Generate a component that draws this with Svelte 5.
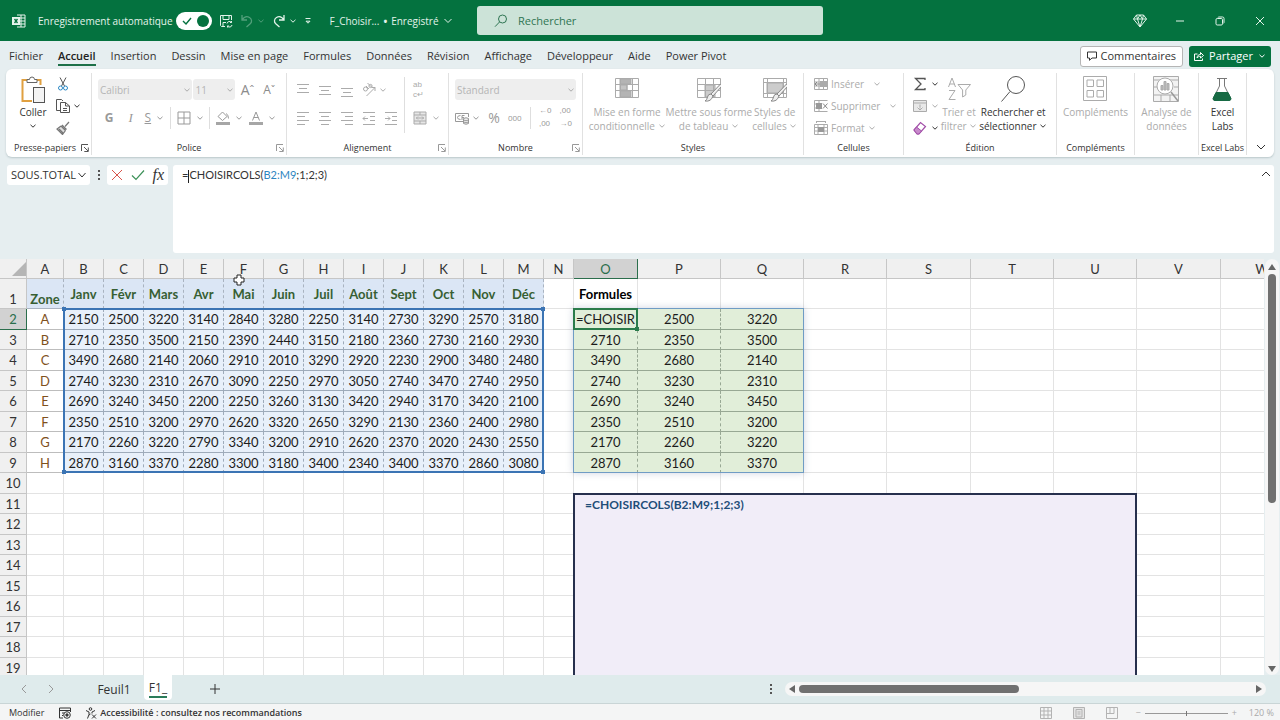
<script lang="ts">
  interface Column {
    name: string;
    width: number;
  }

  const columns: Column[] = [
    { name: 'A', width: 37 },
    ...'BCDEFGHIJKLM'.split('').map((name) => ({ name, width: 40 })),
    { name: 'N', width: 30 },
    { name: 'O', width: 64 },
    ...'PQRSTUVW'.split('').map((name) => ({ name, width: name === 'S' || name === 'V' ? 84 : 83 })),
  ];

  const months = ['Janv', 'Févr', 'Mars', 'Avr', 'Mai', 'Juin', 'Juil', 'Août', 'Sept', 'Oct', 'Nov', 'Déc'];

  const zones = [
    { name: 'A', values: [2150, 2500, 3220, 3140, 2840, 3280, 2250, 3140, 2730, 3290, 2570, 3180] },
    { name: 'B', values: [2710, 2350, 3500, 2150, 2390, 2440, 3150, 2180, 2360, 2730, 2160, 2930] },
    { name: 'C', values: [3490, 2680, 2140, 2060, 2910, 2010, 3290, 2920, 2230, 2900, 3480, 2480] },
    { name: 'D', values: [2740, 3230, 2310, 2670, 3090, 2250, 2970, 3050, 2740, 3470, 2740, 2950] },
    { name: 'E', values: [2690, 3240, 3450, 2200, 2250, 3260, 3130, 3420, 2940, 3170, 3420, 2100] },
    { name: 'F', values: [2350, 2510, 3200, 2970, 2620, 3320, 2650, 3290, 2130, 2360, 2400, 2980] },
    { name: 'G', values: [2170, 2260, 3220, 2790, 3340, 3200, 2910, 2620, 2370, 2020, 2430, 2550] },
    { name: 'H', values: [2870, 3160, 3370, 2280, 3300, 3180, 3400, 2340, 3400, 3370, 2860, 3080] },
  ];

  const menu = ['Fichier', 'Accueil', 'Insertion', 'Dessin', 'Mise en page', 'Formules', 'Données', 'Révision', 'Affichage', 'Développeur', 'Aide', 'Power Pivot'];

  const rows = Array.from({ length: 19 }, (_, i) => i + 1);

  const HEAD_W = 27;
  const HEAD_H = 20;

  function cellText(row: number, col: number): string {
    if (row === 1) {
      if (col === 0) return 'Zone';
      if (col <= 12) return months[col - 1];
      return col === 14 ? 'Formules' : '';
    }
    const zone = zones[row - 2];
    if (!zone) return '';
    if (col === 0) return zone.name;
    if (col <= 12) return String(zone.values[col - 1]);
    if (row === 2 && col === 14) return '=CHOISIR';
    if (col >= 14 && col <= 16) return String(zone.values[col - 14]);
    return '';
  }

  function cellClass(row: number, col: number): string {
    if (row === 1) return col === 0 ? 'month zone-title' : col <= 12 ? 'month' : 'title';
    if (row > 9) return '';
    if (col === 0) return 'zone';
    if (col <= 12) return 'source';
    if (col >= 14 && col <= 16) return 'result';
    return '';
  }

  function colX(col: number): number {
    return HEAD_W + columns.slice(0, col).reduce((sum, c) => sum + c.width, 0);
  }

  // row 1 is 30px, the others go 21, 20, 21, 20...
  function rowY(row: number): number {
    let y = HEAD_H;
    for (let r = 1; r < row; r++) y += r === 1 ? 30 : r % 2 === 0 ? 21 : 20;
    return y;
  }

  function range(c1: number, r1: number, c2: number, r2: number): string {
    const x = colX(c1) - 1;
    const y = rowY(r1) - 1;
    return `left:${x}px;top:${y}px;width:${colX(c2 + 1) - x}px;height:${rowY(r2 + 1) - y}px`;
  }

  let autosave = true;
  let search = '';
  let nameBox = 'SOUS.TOTAL';
  let zoom = 50;
</script>

{#snippet chevron()}
  <svg class="chev" viewBox="0 0 8 8" width="8" height="8"><path d="M1.5 2.8 4 5.2 6.5 2.8" /></svg>
{/snippet}

{#snippet launcher()}
  <svg class="launcher" viewBox="0 0 8 8" width="8" height="8"><path d="M.5 7V.5H7M3 3l4 4M7.3 3.500v4h-4" /></svg>
{/snippet}

<div class="app">
  <header class="titlebar">
    <div class="title-left">
      <svg class="logo" viewBox="0 0 14 14" width="14" height="14">
        <path d="M5 1h8v12H5M5 4h8M5 7h8M5 10h8M9 1v12" fill="none" stroke="#e8f5ee" />
        <rect x="0" y="3" width="8" height="8" fill="#e8f5ee" />
        <path d="m2.500 5 3 4M5.500 5l-3 4" stroke="#04703e" stroke-width="1.3" />
      </svg>
      <label class="autosave">
        <span>Enregistrement automatique</span>
        <input type="checkbox" bind:checked={autosave} />
        <span class="switch">
          <svg viewBox="0 0 10 8" width="10" height="8"><path d="m1 4 3 3 5-6" fill="none" stroke="#04703e" stroke-width="1.4" /></svg>
          <span class="knob"></span>
        </span>
      </label>
      <button class="tool save" aria-label="Enregistrer">
        <svg viewBox="0 0 14 14" width="14" height="14"><path d="M6 12.5H2.5l-1-1V1.5h11V6M4 1.5v4h6v-4M4 12V8.5h3M8 9.5a2.5 2.5 0 0 1 4.5-1V7M12.5 8.5H11M13 11a2.5 2.5 0 0 1-4.5 1v1.5M8.5 12H10" /></svg>
      </button>
      <button class="tool faded undo" aria-label="Annuler">
        <svg viewBox="0 0 14 14" width="14" height="14"><path d="M2 1v5h5M2 6c2-3 5-4 7.5-2.500S12 8 10.5 9.500L6.5 13" stroke-width="1.3" /></svg>
        {@render chevron()}
      </button>
      <button class="tool redo" aria-label="Rétablir">
        <svg viewBox="0 0 14 14" width="14" height="14"><path d="M12 1v5H7M12 6C10 3 7 2 4.500 3.500S2 8 3.500 9.500L7.500 13" stroke-width="1.3" /></svg>
        {@render chevron()}
      </button>
      <button class="tool more" aria-label="Personnaliser">
        <svg viewBox="0 0 8 8" width="8" height="8"><path d="M1.500 1.500h5M2 4.200l2 2 2-2z" /></svg>
      </button>
      <button class="doc">F_Choisir... <b>•</b> Enregistré <svg viewBox="0 0 10 8" width="10" height="8"><path d="m1.500 2 3.500 3.500L8.500 2" /></svg></button>
    </div>
    <label class="search">
      <svg viewBox="0 0 14 14" width="14" height="14"><path d="M12.500 5a4 4 0 1 1-8 0 4 4 0 0 1 8 0M5.500 8 1 12.700" fill="none" stroke="#2f7553" /></svg>
      <input type="text" bind:value={search} placeholder="Rechercher" aria-label="Rechercher" />
    </label>
    <div class="window">
      <button aria-label="Premium">
        <svg viewBox="0 0 14 14" width="14" height="14"><path d="M3.500 1h7L13.500 5 7 13 .5 5zM.5 5h13M4.500 5 7 13l2.500-8L7 1zM3.500 1l1 4M10.500 1l-1 4" /></svg>
      </button>
      <button aria-label="Réduire"><svg viewBox="0 0 10 10" width="10" height="10"><path d="M1 5h8" /></svg></button>
      <button aria-label="Restaurer"><svg viewBox="0 0 10 10" width="10" height="10"><rect x="1" y="2.5" width="6.5" height="6.5" rx="1.2" /><path d="M3 1.500q0-.5.8-.5H7.500q1.500 0 1.500 1.500v4q0 .8-.5.8" /></svg></button>
      <button aria-label="Fermer"><svg viewBox="0 0 10 10" width="10" height="10"><path d="m1 1 8 8M9 1 1 9" /></svg></button>
    </div>
  </header>

  <nav class="menu">
    {#each menu as item}
      <button class:active={item === 'Accueil'}>{item}</button>
    {/each}
    <span class="spacer"></span>
    <button class="comments">
      <svg viewBox="0 0 10 10" width="10" height="10"><path d="M.5 1h9v6H5L2.500 9.300V7h-2z" /></svg>Commentaires
    </button>
    <button class="share">
      <svg viewBox="0 0 10 10" width="10" height="10"><path d="M3.500 3H.5v6.500h8V7.500M3 7c.3-2.500 1.500-3.500 3.500-3.500V1.500L9.500 4.500 6.500 7V5.300C5 5.300 4 5.800 3 7" /></svg>Partager {@render chevron()}
    </button>
  </nav>

  <section class="ribbon">
    <div class="group">
      <div class="body clipboard">
        <button class="big">
          <svg viewBox="0 0 24 28" width="24" height="28">
            <path d="M6 4H1.500v21H11M15 4h4.500v5" fill="none" stroke="#e0a040" stroke-width="2" />
            <path d="M6 6.500V3.500h2.500a2.500 2.500 0 0 1 5 0H16v3z" fill="#fff" stroke="#666" />
            <rect x="12.5" y="11.5" width="11" height="15" fill="#f4f4f4" stroke="#555" />
          </svg>
          <span>Coller</span>
          {@render chevron()}
        </button>
        <div class="stack">
          <button aria-label="Couper">
            <svg viewBox="0 0 14 14" width="14" height="14"><path d="M4 .5 8.500 9M10 .5 5.500 9" stroke="#555" /><circle cx="4.5" cy="11" r="2" stroke="#2b88c4" /><circle cx="9.5" cy="11" r="2" stroke="#2b88c4" /></svg>
          </button>
          <button aria-label="Copier">
            <svg viewBox="0 0 14 14" width="14" height="14"><path d="M4 11.500H.5V.5h5L7 2M4.500 3.500h5l4 3.500v6.500h-9zM9.500 3.500V7h4M7 9.500h4M7 11.500h4" stroke="#555" /></svg>
            {@render chevron()}
          </button>
          <button aria-label="Reproduire la mise en forme">
            <svg viewBox="0 0 14 14" width="14" height="14"><path d="M6 4l4.500 4.500-4 5L1 8l5-4z" fill="#ddd" stroke="none" /><path d="m13 1-4 4.500M6 4l4.500 4.500M5 5l4.500 4.500M5 5 1 8l5.500 5.500 3-4M3 8l4 4" stroke="#777" stroke-width="1.2" /></svg>
          </button>
        </div>
      </div>
      <div class="label">Presse-papiers {@render launcher()}</div>
    </div>

    <div class="group">
      <div class="body two off">
        <div class="line">
          <span class="pick font"><select disabled aria-label="Police"><option>Calibri</option></select>{@render chevron()}</span>
          <span class="pick size"><select disabled aria-label="Taille"><option>11</option></select>{@render chevron()}</span>
          <button class="grow" disabled>A<sup>ˆ</sup></button>
          <button class="shrink" disabled>A<sup>ˇ</sup></button>
        </div>
        <div class="line format">
          <button class="letter" disabled><b>G</b></button>
          <button class="letter" disabled><i>I</i></button>
          <button disabled><u>S</u>{@render chevron()}</button>
          <span class="bar"></span>
          <button disabled aria-label="Bordures"><svg viewBox="0 0 14 14" width="14" height="14"><path d="M1 1h12v12H1zM7 1v12M1 7h12" /></svg>{@render chevron()}</button>
          <span class="bar"></span>
          <button disabled aria-label="Remplissage"><svg viewBox="0 0 14 14" width="14" height="14"><path d="M2 5.500 6.500 1 11 5.500 6.500 9.500zM10 2.500q2.500 1 2.500 5" /><rect x="0" y="11" width="14" height="3" fill="#a6a6a6" stroke="none" /></svg>{@render chevron()}</button>
          <button disabled aria-label="Couleur de police"><svg viewBox="0 0 14 14" width="14" height="14"><path d="M3.500 9.500 7 1l3.500 8.500M4.700 6.500h4.600" /><rect x="0" y="11" width="14" height="3" fill="#a6a6a6" stroke="none" /></svg>{@render chevron()}</button>
        </div>
      </div>
      <div class="label">Police {@render launcher()}</div>
    </div>

    <div class="group">
      <div class="body align off">
        <div class="cells">
          <button disabled aria-label="Haut"><svg viewBox="0 0 14 14" width="14" height="14"><path d="M1 1.500h12M3 5.500h8M1 9.500h12" /></svg></button>
          <button disabled aria-label="Centre"><svg viewBox="0 0 14 14" width="14" height="14"><path d="M1 3.500h12M3 7.500h8M1 11.500h12" /></svg></button>
          <button disabled aria-label="Bas"><svg viewBox="0 0 14 14" width="14" height="14"><path d="M1 5.500h12M3 9.500h8M1 13.500h12" /></svg></button>
          <button class="wide" disabled aria-label="Orientation"><svg viewBox="0 0 14 14" width="14" height="14"><circle cx="3.5" cy="6" r="2" /><path d="m4 3 3 3M5.500 0l4 4" /><circle cx="8.5" cy="3" r="1.6" /><path d="M4.500 13 13 4.500M9.500 4.500H13V8" /></svg>{@render chevron()}</button>
          <button disabled aria-label="Gauche"><svg viewBox="0 0 14 14" width="14" height="14"><path d="M1 1.500h12M1 5.500h8M1 9.500h12M1 13.500h8" /></svg></button>
          <button disabled aria-label="Centrer"><svg viewBox="0 0 14 14" width="14" height="14"><path d="M1 1.500h12M3 5.500h8M1 9.500h12M3 13.500h8" /></svg></button>
          <button disabled aria-label="Droite"><svg viewBox="0 0 14 14" width="14" height="14"><path d="M1 1.500h12M5 5.500h8M1 9.500h12M5 13.500h8" /></svg></button>
          <button disabled aria-label="Diminuer le retrait"><svg viewBox="0 0 14 14" width="14" height="14"><path d="M1 1.500h12M8 5.500h5M8 9.500h5M1 13.500h12M6 7.500H1M3 5.500l-2 2 2 2" /></svg></button>
          <button disabled aria-label="Augmenter le retrait"><svg viewBox="0 0 14 14" width="14" height="14"><path d="M1 1.500h12M8 5.500h5M8 9.500h5M1 13.500h12M1 7.500h5M4 5.500l2 2-2 2" /></svg></button>
        </div>
        <span class="bar tall"></span>
        <div class="wraps">
          <button class="mini" disabled><span>ab</span><span>c↵</span></button>
          <button disabled aria-label="Fusionner"><svg viewBox="0 0 14 14" width="14" height="14"><path d="M1 1h12v12H1zM1 4h12M1 10h12M7 1v3M7 10v3M3 7h8M5 5.500 3.500 7 5 8.500M9 5.500 10.500 7 9 8.500" fill="#e6e6e6" /></svg>{@render chevron()}</button>
        </div>
      </div>
      <div class="label">Alignement {@render launcher()}</div>
    </div>

    <div class="group">
      <div class="body two off">
        <div class="line">
          <span class="pick number"><select disabled aria-label="Format de nombre"><option>Standard</option></select>{@render chevron()}</span>
        </div>
        <div class="line numbers">
          <button disabled aria-label="Comptabilité"><svg viewBox="0 0 14 14" width="14" height="14"><path d="M8 10.500H.5v-8h13V6M5.500 4.500q-3 0-3 2t3 2M7 9V4.500h2.500M7 6.500h2" /><path d="M8.500 7.500q2.500-1.500 5 0v5q-2.500 1.500-5 0zM8.500 9q2.500 1.500 5 0M8.500 11q2.500 1.500 5 0" fill="#eee" /></svg>{@render chevron()}</button>
          <button class="percent" disabled>%</button>
          <button class="zeros" disabled>000</button>
          <span class="bar"></span>
          <button class="mini" disabled><span>←0</span><span>,00</span></button>
          <button class="mini" disabled><span>,00</span><span>→0</span></button>
        </div>
      </div>
      <div class="label">Nombre {@render launcher()}</div>
    </div>

    <div class="group">
      <div class="body off">
        <button class="big" disabled>
          <svg viewBox="0 0 24 28" width="24" height="28"><rect x="5" y="3" width="11" height="5" fill="#b4b4b4" /><rect x="5" y="9" width="7" height="5" fill="#c4c4c4" /><rect x="5" y="15" width="11" height="6" fill="#b4b4b4" /><path d="M.5 2.500h23v19H.5zM.5 8.500h23M.5 14.500h23M5.500 2.500v19M12 8.500v6M17.500 2.500v19" /></svg>
          <span>Mise en forme<br />conditionnelle {@render chevron()}</span>
        </button>
        <button class="big" disabled>
          <svg viewBox="0 0 24 28" width="24" height="28"><rect x="8" y="9" width="10" height="12" fill="#ccc" /><path d="M.5 2.500h23v19H.5zM.5 8.500h23M.5 14.500h23M8.500 2.500v19M16.500 2.500v19" /><path d="M23.500 8 14 18l2 2 9-10zM14 18q-3 0-3.500 3T8 25q6 1 8-5" fill="#eee" stroke="#888" /></svg>
          <span>Mettre sous forme<br />de tableau {@render chevron()}</span>
        </button>
        <button class="big" disabled>
          <svg viewBox="0 0 24 28" width="24" height="28"><rect x="4" y="7" width="16" height="10" fill="#ccc" /><path d="M.5 2.500h23v19H.5zM.5 6.500h23M.5 17.500h23M4.500 2.500v19M20.500 2.500v19" /><path d="M23.500 8 14 18l2 2 9-10zM14 18q-3 0-3.500 3T8 25q6 1 8-5" fill="#eee" stroke="#888" /></svg>
          <span>Styles de<br />cellules {@render chevron()}</span>
        </button>
      </div>
      <div class="label">Styles</div>
    </div>

    <div class="group">
      <div class="body stack named off">
        <button disabled><svg viewBox="0 0 14 14" width="14" height="14"><path d="M.5 1.500h13v11H.5zM.5 5h13M.5 9h13M5 1.500v11M9.500 1.500v11" /><rect x="6" y="4" width="7" height="6" fill="#aaa" stroke="none" /><path d="M6 7H1M3 5 1 7l2 2" stroke="#888" /></svg>Insérer <i></i>{@render chevron()}</button>
        <button disabled><svg viewBox="0 0 14 14" width="14" height="14"><path d="M.5 1.500h13M.5 12.500h13M.5 5H8M.5 9H8M5 1.500v11M.5 1.500v11" /><rect x="2" y="4" width="6" height="6" fill="#999" stroke="none" /><path d="m9 4.500 4.500 5M13.500 4.500 9 9.500" stroke="#888" /></svg>Supprimer <i></i>{@render chevron()}</button>
        <button disabled><svg viewBox="0 0 14 14" width="14" height="14"><path d="M.5 3.500h13v10H.5zM.5 6.500h13M.5 10h13M4 3.500v10M10 3.500v10M2.500.5h9M2.500 0v2M11.500 0v2" /><rect x="4" y="6" width="6" height="5" fill="#999" stroke="none" /></svg>Format {@render chevron()}</button>
      </div>
      <div class="label">Cellules</div>
    </div>

    <div class="group">
      <div class="body edition">
        <div class="stack">
          <button aria-label="Somme automatique"><svg viewBox="0 0 14 14" width="14" height="14"><path d="M12 3V1.500H2.500L8 7l-5.500 5.500H12V11" stroke="#555" stroke-width="1.3" /></svg>{@render chevron()}</button>
          <button class="off" disabled aria-label="Recopier"><svg viewBox="0 0 14 14" width="14" height="14"><path d="M.5 1.500h13v11H.5zM.5 4h13M7 5.500V11M4.500 8.500 7 11l2.500-2.500" fill="#e8e8e8" /></svg>{@render chevron()}</button>
          <button aria-label="Effacer"><svg viewBox="0 0 14 14" width="14" height="14"><path d="m1 9 6.500-7.500 5 4L6 13H4z" fill="#fff" stroke="#a24fa8" stroke-width="1.2" /><path d="m1 9 2.500-3 5 4L6 13H4z" fill="#c78acb" stroke="#a24fa8" /></svg>{@render chevron()}</button>
        </div>
        <button class="big off" disabled>
          <svg viewBox="0 0 24 28" width="24" height="28"><path d="M1.500 11 5 2l3.500 9M2.700 8h4.600M2 14.500h6l-6 9h6.500M11 8.500h12.500l-4.700 5.500v5l-3.200 2v-7z" /></svg>
          <span>Trier et<br />filtrer {@render chevron()}</span>
        </button>
        <button class="big">
          <svg viewBox="0 0 24 28" width="24" height="28"><circle cx="15" cy="9" r="8.5" stroke="#555" /><path d="M9 15.500.5 25.500" stroke="#555" /></svg>
          <span>Rechercher et<br />sélectionner {@render chevron()}</span>
        </button>
      </div>
      <div class="label">Édition</div>
    </div>

    <div class="group">
      <div class="body off">
        <button class="big" disabled>
          <svg viewBox="0 0 24 28" width="24" height="28"><path d="M.5.500h23v24H.5zM4 4h6.500v6.500H4zM14 4h6.500v6.500H14zM4 14.500h6.500V21H4zM14 14.500h6.500V21H14z" /></svg>
          <span>Compléments</span>
        </button>
      </div>
      <div class="label">Compléments</div>
    </div>

    <div class="group">
      <div class="body off">
        <button class="big" disabled>
          <svg viewBox="0 0 26 28" width="26" height="28"><path d="M.5.500h25v25H.5zM.5 4h25M.5 19h25M8 19v6.500M17 19v6.500M.5 11h4M21 11h4.500" fill="#f3f3f3" /><circle cx="12" cy="10" r="8" fill="#fff" /><path d="m18 16 7 9" stroke="#999" stroke-width="1.5" /><path d="M8 9.500h2V14H8zM11 5.500h2V14h-2zM14 7.500h2V14h-2z" fill="#bbb" /></svg>
          <span>Analyse de<br />données</span>
        </button>
      </div>
    </div>

    <div class="group">
      <div class="body">
        <button class="big">
          <svg viewBox="0 0 20 28" width="20" height="28"><path d="M7.500 2.500V10L1.500 22q-.5 2.500 1.500 2.500h14q2 0 1.500-2.500L12.500 10V2.500" stroke="#777" /><path d="M5 2.500h10" stroke="#777" /><path d="M4 16.500h12l3 6q0 2-2 2H3q-2 0-2-2z" fill="#176a44" stroke="#176a44" /></svg>
          <span>Excel<br />Labs</span>
        </button>
      </div>
      <div class="label">Excel Labs</div>
    </div>

    <button class="fold" aria-label="Réduire le ruban"><svg viewBox="0 0 10 8" width="10" height="8"><path d="m1 2 4 4 4-4" /></svg></button>
  </section>

  <section class="formula">
    <div class="namebox">
      <input type="text" bind:value={nameBox} aria-label="Zone Nom" />
      <svg viewBox="0 0 10 8" width="10" height="8"><path d="m1.500 2 3.500 4 3.500-4" /></svg>
    </div>
    <span class="dots"></span>
    <div class="actions">
      <button aria-label="Annuler"><svg viewBox="0 0 12 12" width="12" height="12"><path d="m1 1 10 10M11 1 1 11" stroke="#d9534a" /></svg></button>
      <button aria-label="Entrer"><svg viewBox="0 0 14 12" width="14" height="12"><path d="m1 6.500 4 4L13 1.500" stroke="#3d9158" stroke-width="1.2" /></svg></button>
      <button class="fx">fx</button>
    </div>
    <div class="editor">
      <div class="text" contenteditable="true" role="textbox" tabindex="0" aria-label="Barre de formule" spellcheck="false">=<span class="caret"></span>CHOISIRCOLS(<span class="ref">B2:M9</span>;1;2;3)</div>
      <button aria-label="Réduire la barre"><svg viewBox="0 0 10 8" width="10" height="8"><path d="m1 6 4-4 4 4" /></svg></button>
    </div>
  </section>

  <main class="sheet">
    <div class="canvas">
      <table>
        <colgroup>
          <col style="width:{HEAD_W}px" />
          {#each columns as column}
            <col style="width:{column.width}px" />
          {/each}
        </colgroup>
        <thead>
          <tr>
            <th class="corner"><svg viewBox="0 0 14 14" width="14" height="14"><path d="M14 0v14H0z" fill="#b5b5b5" /></svg></th>
            {#each columns as column}
              <th scope="col" class:current={column.name === 'O'}>{column.name}</th>
            {/each}
          </tr>
        </thead>
        <tbody>
          {#each rows as row}
            <tr>
              <th scope="row" class:current={row === 2}>{row}</th>
              {#each columns as _, col}
                <td class={cellClass(row, col)}>{cellText(row, col)}</td>
              {/each}
            </tr>
          {/each}
        </tbody>
      </table>

      <div class="spill" style={range(14, 2, 16, 9)}></div>
      <div class="reference" style={range(1, 2, 12, 9)}><i></i><i></i><i></i><i></i></div>
      <div class="cell-edit" style={range(14, 2, 14, 2)}><i></i></div>
      <div class="textbox" style={range(14, 11, 20, 20)}>=CHOISIRCOLS(B2:M9;1;2;3)</div>
      <svg class="pointer" viewBox="0 0 12 12" width="12" height="12" style="left:{colX(5) + 9}px;top:{HEAD_H - 5}px"><path d="M4 1h4v3h3v4H8v3H4V8H1V4h3z" fill="#fff" stroke="#222" /></svg>
    </div>
    <div class="vscroll">
      <svg viewBox="0 0 8 8" width="8" height="8"><path d="m4 1 4 6H0z" /></svg>
      <span class="thumb"></span>
      <span class="rest"></span>
      <svg viewBox="0 0 8 8" width="8" height="8"><path d="M4 7 0 1h8z" /></svg>
    </div>
  </main>

  <div class="sheetbar">
    <div class="tabs">
      <button class="arrow" aria-label="Précédent"><svg viewBox="0 0 8 10" width="8" height="10"><path d="M6 1 2 5l4 4" /></svg></button>
      <button class="arrow" aria-label="Suivant"><svg viewBox="0 0 8 10" width="8" height="10"><path d="m2 1 4 4-4 4" /></svg></button>
      <button class="sheet-tab">Feuil1</button>
      <button class="sheet-tab selected"><span>F1_</span></button>
      <button class="add" aria-label="Nouvelle feuille"><svg viewBox="0 0 10 10" width="10" height="10"><path d="M5 0v10M0 5h10" /></svg></button>
    </div>
    <div class="hscroll-area">
      <span class="dots"></span>
      <div class="hscroll">
        <svg viewBox="0 0 8 8" width="8" height="8"><path d="m1 4 6-4v8z" /></svg>
        <span class="thumb"></span>
        <span class="rest"></span>
        <svg viewBox="0 0 8 8" width="8" height="8"><path d="M7 4 1 0v8z" /></svg>
      </div>
    </div>
  </div>

  <footer class="status">
    <span class="mode">Modifier</span>
    <svg class="macro" viewBox="0 0 12 12" width="12" height="12"><path d="M4 11H.5V1h11v4M.5 3.500h11M3 6h2M3 8.500h1" /><circle cx="8" cy="8" r="3.3" /><circle cx="8" cy="8" r="1.2" fill="#444" /></svg>
    <button class="access">
      <svg viewBox="0 0 12 12" width="12" height="12"><circle cx="5.5" cy="2" r="1.3" /><path d="M1 3.500 4 5v2.500L2.500 11.500M10 3.500 7 5v1.500M4 8l1.500-1M7 7.500l4 4M11 7.500l-4 4" /></svg>
      Accessibilité : consultez nos recommandations
    </button>
    <span class="spacer"></span>
    <button class="view" aria-label="Normal"><svg viewBox="0 0 12 12" width="12" height="12"><path d="M.5.500h11v11H.5zM.5 4h11M.5 8h11M4 .5v11M8 .5v11" /></svg></button>
    <button class="view" aria-label="Mise en page"><svg viewBox="0 0 12 12" width="12" height="12"><path d="M.5.500h11v11H.5zM3 2.500h6v7.500H3zM4.500 5h3M4.500 7h3" fill="#e4e4e4" /></svg></button>
    <button class="view" aria-label="Sauts de page"><svg viewBox="0 0 12 12" width="12" height="12"><path d="M.5.500h11v11H.5zM.5 6.500H8v-6M4 .5v6" /></svg></button>
    <span class="zoom">
      <span>−</span>
      <input type="range" min="0" max="100" bind:value={zoom} aria-label="Zoom" />
      <span>+</span>
    </span>
    <span class="percent-zoom">120 %</span>
  </footer>
</div>

<style>
  :global(body) {
    background: #e6eef0;
  }

  .app {
    display: flex;
    flex-direction: column;
    height: 100vh;
    overflow: hidden;
    font-family: 'Open Sans', 'Noto Sans', sans-serif;
    font-size: 10px;
    line-height: 14px;
    color: #333;
    background: #e6eef0;
  }

  button, input, select {
    font: inherit;
    color: inherit;
    margin: 0;
    padding: 0;
    border: 0;
    background: none;
  }

  button {
    display: flex;
    align-items: center;
    justify-content: center;
    white-space: nowrap;
  }

  svg {
    flex: none;
    display: block;
    fill: none;
    stroke: currentColor;
  }

  .spacer {
    flex: 1;
  }

  /* title bar */
  .titlebar {
    display: grid;
    grid-template-columns: 477fr 346fr 457fr;
    align-items: center;
    height: 41px;
    flex: none;
    background: #04723f;
    color: #e3f3ea;
  }

  .title-left {
    display: flex;
    align-items: center;
    padding-left: 12px;
    white-space: nowrap;
  }

  .logo {
    margin-right: 12px;
    stroke: none;
  }

  .autosave {
    display: flex;
    align-items: center;
    gap: 3px;
  }

  .autosave input {
    position: absolute;
    opacity: 0;
  }

  .switch {
    display: flex;
    align-items: center;
    justify-content: space-between;
    width: 24px;
    height: 18px;
    padding: 0 6px;
    border-radius: 9px;
    background: #fff;
  }

  .knob {
    width: 12px;
    height: 12px;
    margin-right: -3px;
    border-radius: 50%;
    background: #04723f;
  }

  .tool {
    gap: 3px;
  }

  .save, .undo, .redo, .more {
    margin-left: 7px;
  }

  .faded {
    opacity: 0.35;
  }

  .doc {
    gap: 4px;
    margin-left: 18px;
  }

  .search {
    display: flex;
    align-items: center;
    gap: 10px;
    height: 29px;
    padding-left: 17px;
    border-radius: 3px;
    background: #cce3d8;
  }

  .search input {
    flex: 1;
    min-width: 0;
    font-size: 11px;
    outline: none;
  }

  .search input::placeholder {
    color: #2f7553;
    opacity: 1;
  }

  .window {
    display: flex;
    justify-content: flex-end;
  }

  .window button {
    width: 40px;
    height: 40px;
  }

  /* menu tabs */
  .menu {
    display: flex;
    align-items: center;
    flex: none;
    height: 26px;
    padding: 2px 9px 0;
    gap: 15px;
    font-size: 11px;
  }

  .menu button {
    height: 20px;
    border-bottom: 2px solid transparent;
    border-top: 2px solid transparent;
  }

  .menu .active {
    color: #222;
    font-weight: 600;
    border-bottom-color: #1d7048;
  }

  .menu .comments {
    gap: 4px;
    height: 21px;
    padding: 0 6px;
    border: 1px solid #b5b5b5;
    border-radius: 3px;
    background: #fff;
  }

  .menu .share {
    gap: 5px;
    height: 21px;
    padding: 0 5px;
    margin-left: -9px;
    border: 0;
    border-radius: 3px;
    background: #04723f;
    color: #fff;
  }

  /* ribbon */
  .ribbon {
    display: grid;
    grid-template-columns: 86fr 195fr 162fr 134fr 221fr 100fr 153fr 78fr 64fr 48fr 27fr;
    flex: none;
    height: 88px;
    margin: 0 6px;
    border-radius: 6px;
    background: #fff;
    box-shadow: 0 1px 2px #b9c6c9;
  }

  .group {
    display: flex;
    flex-direction: column;
    min-width: 0;
    margin: 4px 0;
    border-right: 1px solid #e1e1e1;
  }

  .body {
    display: flex;
    justify-content: center;
    height: 68px;
  }

  .label {
    display: flex;
    justify-content: center;
    font-size: 9px;
    white-space: nowrap;
  }

  .launcher {
    margin: 3px 2px 0 auto;
    color: #999;
  }

  .label:has(.launcher)::before {
    content: '';
    width: 10px;
    margin-right: auto;
  }

  .group:first-child .label::before {
    width: 8px;
    margin-right: 0;
  }

  .group:first-child .launcher {
    color: #555;
  }

  .off {
    color: #ababab;
  }

  .big {
    flex-direction: column;
    justify-content: flex-start;
    padding-top: 3px;
  }

  .big > span {
    text-align: center;
    margin-top: 1px;
  }

  .big > .chev {
    margin-top: 3px;
  }

  .big span .chev {
    display: inline-block;
  }

  .clipboard {
    gap: 9px;
    padding-left: 3px;
  }

  .stack {
    display: flex;
    flex-direction: column;
  }

  .stack button {
    height: 22px;
    gap: 3px;
    justify-content: flex-start;
  }

  .two {
    flex-direction: column;
    justify-content: flex-start;
    gap: 7px;
    padding: 6px 6px 0;
    height: 62px;
  }

  .line {
    display: flex;
    align-items: center;
    height: 21px;
  }

  .pick {
    display: grid;
    align-items: center;
    height: 21px;
    border-radius: 3px;
    background: #eee;
  }

  .pick select {
    grid-area: 1 / 1;
    appearance: none;
    width: 100%;
    height: 21px;
    padding-left: 2px;
    color: #b5b5b5;
    opacity: 1;
  }

  .pick .chev {
    grid-area: 1 / 1;
    justify-self: end;
    margin-right: 1px;
  }

  .font {
    width: 96px;
  }

  .size {
    width: 42px;
    margin: 0 2px 0 1px;
  }

  .number {
    flex: 1;
  }

  .grow, .shrink {
    width: 22px;
    font-size: 14px;
    color: #8c8c8c;
  }

  .shrink {
    font-size: 12px;
  }

  .format, .numbers {
    justify-content: space-between;
  }

  .format {
    padding: 0 4px 0 3px;
    font-size: 12px;
    color: #999;
  }

  .format button {
    gap: 5px;
  }

  .format .letter {
    width: 16px;
  }

  .format i {
    font-family: 'Liberation Serif', serif;
    font-size: 13px;
  }

  .bar {
    width: 1px;
    height: 22px;
    background: #dedede;
  }

  .bar.tall {
    height: 56px;
    margin-top: 4px;
  }

  .align {
    gap: 2px;
    padding: 0 4px;
  }

  .cells {
    display: grid;
    grid-template-columns: repeat(5, 22px);
    grid-template-rows: 28px 28px;
    align-content: start;
    padding-top: 3px;
  }

  .cells .wide {
    grid-column: span 2;
    justify-content: flex-start;
    gap: 3px;
    padding-left: 4px;
  }

  .wraps {
    display: flex;
    flex-direction: column;
    padding-top: 3px;
  }

  .wraps button {
    height: 28px;
    width: 36px;
    gap: 5px;
    justify-content: flex-start;
    padding-left: 6px;
  }

  .mini, .wraps .mini {
    flex-direction: column;
    gap: 0;
    justify-content: center;
    align-items: flex-start;
    font-family: 'Liberation Sans', sans-serif;
    font-size: 8px;
    line-height: 10px;
  }

  .numbers {
    padding-right: 4px;
    color: #999;
  }

  .numbers button {
    gap: 3px;
  }

  .percent {
    font-size: 14px;
  }

  .zeros {
    font-size: 8px;
  }

  .named {
    justify-content: flex-start;
    padding-left: 10px;
  }

  .named i {
    width: 3px;
  }

  .edition {
    gap: 2px;
  }

  .edition .stack button {
    gap: 4px;
  }

  .fold {
    align-self: end;
    height: 24px;
  }

  /* formula bar */
  .formula {
    display: flex;
    align-items: flex-start;
    flex: none;
    padding: 8px 6px 6px 7px;
  }

  .namebox, .actions {
    display: flex;
    align-items: center;
    height: 20px;
    border-radius: 3px;
    background: #fff;
  }

  .namebox {
    width: 79px;
    padding: 0 0 0 4px;
    font-size: 11px;
  }

  .namebox input {
    width: 66px;
    outline: none;
  }

  .dots {
    width: 2px;
    height: 10px;
    margin: 5px 7px 0 8px;
    background: repeating-linear-gradient(#555 0 2px, transparent 2px 4px);
  }

  .actions {
    justify-content: space-around;
    width: 61px;
  }

  .fx {
    font: italic 16px 'Liberation Serif', serif;
  }

  .editor {
    display: flex;
    align-items: flex-start;
    flex: 1;
    height: 88px;
    margin: 0 0 0 5px;
    padding-left: 9px;
    border-radius: 3px;
    background: #fff;
  }

  .editor .text {
    flex: 1;
    padding-top: 3px;
    outline: none;
    font-family: Lato, 'Open Sans', sans-serif;
    font-size: 11px;
  }

  .editor button {
    width: 16px;
    height: 18px;
  }

  .caret {
    display: inline-block;
    width: 1px;
    height: 13px;
    vertical-align: middle;
    background: #222;
  }

  .ref {
    color: #2e86c1;
  }

  /* grid */
  .sheet {
    display: flex;
    flex: 1;
    min-height: 0;
  }

  .canvas {
    position: relative;
    flex: 1;
    min-width: 0;
    overflow: hidden;
    background: #fff;
  }

  table {
    width: 0;
    table-layout: fixed;
    border-collapse: separate;
    border-spacing: 0;
    font-family: Lato, 'Open Sans', sans-serif;
    font-size: 13px;
    line-height: 16px;
    color: #1c1c1c;
  }

  th, td {
    height: 20px;
    padding: 0;
    box-sizing: border-box;
    text-align: center;
    vertical-align: middle;
    white-space: nowrap;
    border-right: 1px solid #e3e3e3;
    border-bottom: 1px solid #e3e3e3;
  }

  th {
    font-weight: 400;
    background: #f0f0f0;
    color: #333;
    border-color: #c6c6c6;
  }

  tbody tr:nth-child(even) > * {
    height: 21px;
  }

  tbody tr:first-child > * {
    height: 30px;
  }

  tbody tr:first-child th {
    padding-top: 10px;
  }

  .corner svg {
    margin-left: auto;
    stroke: none;
  }

  th.current {
    background: #d2d2d2;
    color: #2b6e4c;
    border-color: #2b6e4c;
  }

  .month {
    font-weight: 700;
    color: #375f33;
    background: #dbe6f5;
    border-color: #a9b3c0;
    border-right-style: dashed;
  }

  .zone-title {
    padding-top: 10px;
  }

  .title {
    font-weight: 700;
    color: #000;
  }

  .zone {
    color: #80511c;
    border-color: #bdbdbd;
  }

  .source {
    background: #e8f0fa;
    border-color: #9eabba;
    border-right-style: dashed;
  }

  .result {
    background: #e1eed9;
    border-color: #98a894;
    border-right-style: dashed;
  }

  .spill, .reference, .cell-edit, .textbox {
    position: absolute;
    box-sizing: border-box;
  }

  .spill {
    border: 1px solid #6f9cc4;
    box-shadow: 0 0 7px rgba(90, 110, 150, 0.3);
  }

  .reference {
    border: 2px solid #3b74b4;
  }

  .reference i, .cell-edit i {
    position: absolute;
    width: 4px;
    height: 4px;
    background: #3b74b4;
  }

  .reference i:nth-child(odd) { left: -3px; }
  .reference i:nth-child(even) { right: -3px; }
  .reference i:nth-child(-n + 2) { top: -3px; }
  .reference i:nth-child(n + 3) { bottom: -3px; }

  .cell-edit {
    border: 2px solid #2b7c4b;
  }

  .cell-edit i {
    right: -3px;
    bottom: -3px;
    background: #2b7c4b;
  }

  .textbox {
    padding: 2px 10px;
    border: 2px solid #27304d;
    background: #f1edf8;
    font-family: Lato, 'Open Sans', sans-serif;
    font-weight: 700;
    font-size: 12px;
    line-height: 16px;
    color: #1f4e79;
  }

  .pointer {
    position: absolute;
  }

  .vscroll {
    display: flex;
    flex-direction: column;
    align-items: center;
    width: 14px;
    flex: none;
    margin-left: 1px;
    margin-right: 1px;
    padding: 4px 0 2px;
    gap: 3px;
    border-radius: 7px;
    background: #f6f6f6;
    box-sizing: border-box;
  }

  .vscroll svg, .hscroll svg {
    fill: #666;
    stroke: none;
  }

  .thumb {
    border-radius: 4px;
    background: #707070;
  }

  .vscroll .thumb {
    width: 8px;
    flex: 231;
  }

  .vscroll .rest {
    flex: 157;
  }

  /* sheet tabs */
  .sheetbar {
    display: grid;
    grid-template-columns: 769fr 511fr;
    flex: none;
    height: 28px;
    background: #dfebec;
  }

  .tabs {
    display: flex;
    align-items: center;
    padding-left: 10px;
    font-size: 12px;
  }

  .arrow {
    width: 27px;
    height: 24px;
    color: #999;
  }

  .sheet-tab {
    margin-left: 20px;
    padding-top: 2px;
    width: 60px;
  }

  .sheet-tab.selected {
    align-self: flex-start;
    width: 28px;
    height: 25px;
    margin-left: 0;
    border-radius: 0 0 4px 4px;
    background: #fff;
  }

  .selected span {
    line-height: 16px;
    border-bottom: 2px solid #2b7c5a;
  }

  .add {
    width: 20px;
    height: 24px;
    margin-left: 33px;
  }

  .hscroll-area {
    display: flex;
    align-items: center;
    padding-right: 14px;
  }

  .hscroll-area .dots {
    margin: 0 13px 0 1px;
  }

  .hscroll {
    display: flex;
    align-items: center;
    flex: 1;
    gap: 3px;
    height: 14px;
    padding: 0 3px;
    border-radius: 7px;
    background: #f6f6f6;
  }

  .hscroll .thumb {
    height: 8px;
    flex: 222;
  }

  .hscroll .rest {
    flex: 232;
  }

  /* status bar */
  .status {
    display: flex;
    align-items: center;
    flex: none;
    height: 17px;
    padding: 2px 6px 0 9px;
    border-top: 1px solid #c9d5d6;
    box-sizing: border-box;
    background: #f4f5f5;
    font-size: 9px;
  }

  .macro {
    margin: 0 14px 0 15px;
  }

  .access {
    gap: 3px;
    font-weight: 600;
  }

  .view {
    width: 33px;
    color: #b3b3b3;
  }

  .zoom {
    display: flex;
    align-items: center;
    gap: 4px;
    margin-left: 7px;
    color: #aaa;
  }

  .zoom input {
    appearance: none;
    width: 83px;
    height: 10px;
    background: linear-gradient(#999, #999) center / 100% 1px no-repeat;
  }

  .zoom input::-webkit-slider-thumb {
    appearance: none;
    width: 1px;
    height: 5px;
    background: #777;
  }

  .percent-zoom {
    margin-left: 12px;
    color: #aaa;
  }
</style>
